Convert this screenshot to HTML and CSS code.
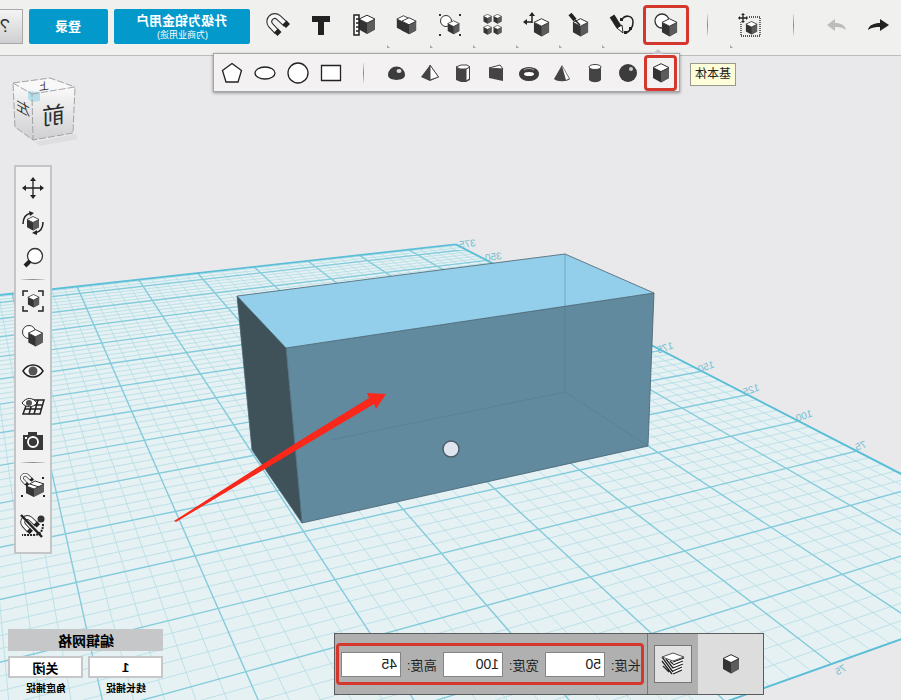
FILE: index.html
```html
<!DOCTYPE html>
<html lang="zh-CN">
<head>
    <meta charset="UTF-8">
    <title>3D 设计</title>
    <link rel="stylesheet" href="styles.css">
</head>
<body>
    <!-- shared shapes for the icons -->
    <svg class="defs" aria-hidden="true">
        <symbol id="cube" viewBox="0 0 18 20">
            <path d="M9 .7L17 4.6V15L9 19.4 1 15V4.6z" fill="#333"/>
            <path d="M9 8.6L17 4.6V15L9 19.4z" fill="#5c5c5c"/>
            <path d="M9 .7L17 4.6 9 8.6 1 4.6z" fill="#fff" stroke="#333"/>
        </symbol>
        <symbol id="magnet" viewBox="0 0 24 24">
            <path d="M11 19L4.500 12A5.500 5.500 0 0 1 12.500 4.500L20 11.500" fill="none" stroke="#333" stroke-width="6"/>
            <path d="M11 19L4.500 12A5.500 5.500 0 0 1 12.500 4.500L20 11.500" fill="none" stroke="#f8f8f8" stroke-width="3.800"/>
            <path d="M8 19.500l4-4 3.500 3.500-4 4zM16.500 11.500l4-4 3.500 3.500-4 4z" fill="#222"/>
        </symbol>
    </svg>

    <div class="app">
        <svg class="scene" viewBox="0 0 901 700" preserveAspectRatio="xMidYMid slice" aria-hidden="true">
            <path id="gridPlane" class="grid-plane"/>
            <path id="gridMinor" class="grid-minor"/>
            <path id="gridMajor" class="grid-major"/>
            <path id="gridEdge" class="grid-edge"/>
            <g id="gridLabels" class="grid-labels"></g>

            <path d="M237 296L565 254 654 293 286 348z" fill="#93cfeb"/>
            <path d="M237 296L286 348 302 523 252 450z" fill="#3f5259"/>
            <path d="M286 348L654 293 648 446 302 523z" fill="#628a9f"/>
            <path class="hidden-edge" d="M565 254V392L648 446M565 392L330 440"/>
            <path class="solid-edge" d="M237 296L565 254 654 293 286 348zM286 348L302 523 648 446 654 293M237 296L252 450 302 523"/>
            <circle cx="451" cy="449" r="8" fill="#dfe5ee" stroke="#4d5c68" stroke-width="1.500"/>
            <path d="M174 521L296 443 369 398 367 393 386 394 376 409 374 404 300 448 176 522z" fill="#f8281b"/>
        </svg>

        <header class="topbar">
            <button class="help" type="button"><span class="flip">?</span></button>
            <button class="blue login" type="button"><span class="flip">登录</span></button>
            <button class="blue upgrade" type="button">
                <span class="flip">升级为铂金用户</span>
                <small class="flip">(为商业用途)</small>
            </button>

            <button class="tool" type="button" aria-label="吸附">
                <svg width="24" height="24"><use href="#magnet"/></svg>
            </button>
            <button class="tool" type="button" aria-label="文本">
                <svg width="20" height="20"><path d="M1 1H19V7H13V20H7V7H1z" fill="#222"/></svg>
            </button>
            <button class="tool" type="button" aria-label="测量">
                <svg width="24" height="24">
                    <use href="#cube" x="6" y="1" width="18" height="21"/>
                    <path d="M2 2H7V22H2zM4 6H7M4 10H7M4 14H7M4 18H7" fill="#fff" stroke="#222" stroke-width="1.500"/>
                </svg>
            </button>
            <button class="tool has-menu" type="button" aria-label="合并">
                <svg width="24" height="24">
                    <use href="#cube" x="1" y="2" width="15" height="17"/>
                    <use href="#cube" x="6" y="4" width="16" height="18"/>
                </svg>
            </button>
            <button class="tool has-menu" type="button" aria-label="分组">
                <svg width="24" height="24">
                    <circle cx="8" cy="8" r="5.500" fill="#fff" stroke="#333"/>
                    <use href="#cube" x="9" y="7" width="13" height="15"/>
                    <path d="M1 1h2v2H1zM21 1h2v2h-2zM1 21h2v2H1zM21 21h2v2h-2z" fill="#333"/>
                </svg>
            </button>
            <button class="tool has-menu" type="button" aria-label="阵列">
                <svg width="22" height="22">
                    <use href="#cube" x="1" y="0" width="9" height="10"/>
                    <use href="#cube" x="11" y="0" width="9" height="10"/>
                    <use href="#cube" x="1" y="11" width="9" height="10"/>
                    <use href="#cube" x="11" y="11" width="9" height="10"/>
                </svg>
            </button>
            <button class="tool has-menu" type="button" aria-label="变换">
                <svg width="28" height="26">
                    <use href="#cube" x="11" y="6" width="17" height="19"/>
                    <path d="M10 11V3M10 10H3" fill="none" stroke="#222" stroke-width="1.500"/>
                    <path d="M10 0l3 4H7zM1 10l4-3v6z" fill="#222"/>
                </svg>
            </button>
            <button class="tool has-menu" type="button" aria-label="修改">
                <svg width="24" height="26">
                    <use href="#cube" x="5" y="6" width="17" height="19"/>
                    <path d="M3 2L8 8" stroke="#222" stroke-width="4"/>
                    <path d="M8 8L13 13" stroke="#222" stroke-width="1.500"/>
                </svg>
            </button>
            <button class="tool has-menu" type="button" aria-label="草图">
                <svg width="26" height="24">
                    <path d="M3 3L10 14" stroke="#222" stroke-width="5.500"/>
                    <path d="M8 15L13 12 14 20z" fill="#fff" stroke="#222"/>
                    <path d="M13 6C17 1 24 3 24 9S21 18 17 20" fill="none" stroke="#222" stroke-width="1.500"/>
                    <path d="M11 5h3v3h-3zM20 14h3v3h-3zM15 18h3v3h-3z" fill="#222"/>
                </svg>
            </button>
            <button class="tool tool-active" type="button" aria-label="基本体">
                <svg width="26" height="26">
                    <circle cx="9" cy="9" r="7" fill="#fff" stroke="#333" stroke-width="1.300"/>
                    <use href="#cube" x="8" y="6" width="17" height="19"/>
                </svg>
            </button>

            <span class="divider"></span>
            <button class="tool has-menu" type="button" aria-label="选择">
                <svg width="24" height="24">
                    <rect x="3" y="4" width="19" height="19" fill="none" stroke="#222" stroke-width="1.300" stroke-dasharray="1 1"/>
                    <use href="#cube" x="7" y="8" width="13" height="14"/>
                    <circle cx="5" cy="5" r="5" fill="#f0f0ef"/>
                    <path d="M5 1V9M1 5H9" stroke="#222" stroke-width="1.300"/>
                    <path d="M5 0l2 2H3zM5 10l2-2H3zM0 5l2-2v4zM10 5l-2-2v4z" fill="#222"/>
                </svg>
            </button>
            <span class="divider wide"></span>
            <button class="tool history" type="button" aria-label="撤销">
                <svg width="22" height="16"><path d="M1 8L9 2V6C15 6 19 8 20 13 16 10 13 10 9 10V14z" fill="#bcbcbc"/></svg>
            </button>
            <button class="tool history" type="button" aria-label="重做">
                <svg width="22" height="16"><path d="M21 8L12 2V6C6 6 1 8 0 13 4 10 8 10 12 10V14z" fill="#222"/></svg>
            </button>

            <div class="shapes">
                <button type="button" aria-label="多边形"><svg width="22" height="22"><path d="M11 1.500L20.500 8.500 17 20H5L1.500 8.500z" fill="#fff" stroke="#222" stroke-width="1.300"/></svg></button>
                <button type="button" aria-label="椭圆"><svg width="22" height="22"><ellipse cx="11" cy="11" rx="10" ry="6" fill="#fff" stroke="#222" stroke-width="1.300"/></svg></button>
                <button type="button" aria-label="圆"><svg width="22" height="22"><circle cx="11" cy="11" r="10" fill="#fff" stroke="#222" stroke-width="1.300"/></svg></button>
                <button type="button" aria-label="矩形"><svg width="22" height="22"><path d="M1.500 3.500H20.500V18.500H1.500z" fill="#fff" stroke="#222" stroke-width="1.300"/></svg></button>
                <span class="shapes-divider"></span>
                <button type="button" aria-label="半球"><svg width="20" height="20"><path d="M1 12A8 8 0 0 1 18 12C18 18.500 1 18.500 1 12z" fill="#3c3c3c"/><ellipse cx="12" cy="8" rx="2.500" ry="2" fill="#ddd"/></svg></button>
                <button type="button" aria-label="棱锥"><svg width="20" height="20"><path d="M10 2L1 14 10 18 19 14z" fill="#444"/><path d="M10 2V17L18.500 14z" fill="#fff" stroke="#444"/></svg></button>
                <button type="button" aria-label="棱柱"><svg width="20" height="20"><path d="M3 4V17L8 19H13L17 17V4z" fill="#444"/><path d="M13 6V18L16.500 16V4z" fill="#fff" stroke="#444"/><path d="M3 4L8 2H14L17 4 13 6H7z" fill="#fff" stroke="#444"/></svg></button>
                <button type="button" aria-label="楔形"><svg width="20" height="20"><path d="M3 5V15L17 18V6z" fill="#444"/><path d="M3 5L14 2 17 6z" fill="#fff" stroke="#444"/></svg></button>
                <button type="button" aria-label="圆环"><svg width="22" height="20"><ellipse cx="11" cy="11" rx="7" ry="4" fill="#fff" stroke="#3c3c3c" stroke-width="6"/><ellipse cx="11" cy="11" rx="5" ry="2" fill="#fff"/><path d="M6 7C9 5 13 5 16 7" fill="none" stroke="#aaa"/></svg></button>
                <button type="button" aria-label="圆锥"><svg width="20" height="20"><path d="M10 2L2 16C5 19 15 19 18 16z" fill="#444"/><path d="M10 3L14 17 17 15.500z" fill="#fff"/></svg></button>
                <button type="button" aria-label="圆柱"><svg width="20" height="20"><path d="M4 4V17C7 20 13 20 16 17V4z" fill="#444"/><ellipse cx="10" cy="4" rx="6" ry="2.500" fill="#fff" stroke="#444"/></svg></button>
                <button type="button" aria-label="球"><svg width="20" height="20"><circle cx="10" cy="10" r="9" fill="#3c3c3c"/><ellipse cx="13" cy="6" rx="2" ry="2" fill="#ccc"/></svg></button>
                <button type="button" class="shape-active" aria-label="长方体"><svg width="18" height="20"><use href="#cube"/></svg></button>
            </div>
            <span class="tooltip"><span class="flip">基本体</span></span>
        </header>

        <main class="workspace">
            <svg class="viewcube" width="72" height="72" viewBox="8 75 72 72" role="img" aria-label="视图">
                <defs>
                    <linearGradient id="face" x1="0" y1="0" x2="0" y2="1">
                        <stop offset="0" stop-color="#fafafa"/>
                        <stop offset="1" stop-color="#cfcfd2"/>
                    </linearGradient>
                </defs>
                <path d="M16 128L34 142 76 134 78 139 40 146z" fill="#dedde0"/>
                <path d="M13 83L32 94 33 140 15 127z" fill="url(#face)"/>
                <path d="M32 94L75 87 73 133 33 140z" fill="url(#face)"/>
                <path d="M13 83L50 78 75 87 32 94z" fill="#f8f8f9"/>
                <path d="M28 91L40 92V101L32 102 28 99z" fill="#b5dfea"/>
                <path d="M13 83L32 94 33 140 15 127zM32 94L75 87 73 133 33 140M13 83L50 78 75 87" fill="none" stroke="#a3a3a6" stroke-dasharray="7 2"/>
                <text class="cube-front" transform="translate(65 122) skewY(-8) scale(-1 1)">前</text>
                <text class="cube-side" transform="translate(30 117) skewY(30) scale(-1 1)">左</text>
                <text class="cube-top" transform="translate(49 89) skewY(-8) scale(-1 1)">上</text>
            </svg>

            <nav class="sidebar">
                <button type="button" aria-label="平移">
                    <svg width="22" height="22"><path d="M11 3V19M3 11H19" stroke="#222" stroke-width="1.300"/><path d="M11 0l3 4H8zM11 22l3-4H8zM0 11l4-3v6zM22 11l-4-3v6z" fill="#222"/></svg>
                </button>
                <button type="button" aria-label="环绕">
                    <svg width="24" height="24"><use href="#cube" x="5" y="5" width="14" height="15"/><path d="M2 13C2 6 5 3 10 2M22 11C22 18 19 21 14 22" fill="none" stroke="#222" stroke-width="1.500"/><path d="M8 0l5 2-4 3zM16 19l-5 3 5 2z" fill="#222"/></svg>
                </button>
                <button type="button" aria-label="缩放">
                    <svg width="22" height="22"><circle cx="13" cy="9" r="7.500" fill="#fff" stroke="#333" stroke-width="1.300"/><path d="M8 14L3 19" stroke="#222" stroke-width="4"/></svg>
                </button>
                <span class="rule"></span>
                <button type="button" aria-label="适应窗口">
                    <svg width="22" height="22"><path d="M1 6V1H6M16 1H21V6M21 16V21H16M6 21H1V16" fill="none" stroke="#222" stroke-width="1.500"/><use href="#cube" x="5" y="4" width="13" height="14"/></svg>
                </button>
                <button type="button" aria-label="显示样式">
                    <svg width="24" height="24"><circle cx="8" cy="8" r="6.500" fill="#fff" stroke="#333"/><use href="#cube" x="6" y="5" width="17" height="18"/></svg>
                </button>
                <button type="button" aria-label="显示">
                    <svg width="22" height="16"><path d="M1 8C6 0 16 0 21 8 16 16 6 16 1 8z" fill="#fff" stroke="#222" stroke-width="1.500"/><circle cx="11" cy="8" r="4.500" fill="#555"/></svg>
                </button>
                <button type="button" aria-label="网格显示">
                    <svg width="24" height="18"><path d="M8 3H23L19 17H2L5 9M3.500 12H21M7 8H22M8 17L12 3M13 17L17 3" fill="none" stroke="#222" stroke-width="1.500"/><path d="M1 6C5 0 12 0 16 6 12 11 5 11 1 6z" fill="#fff" stroke="#222"/><circle cx="8" cy="6" r="3" fill="#555"/></svg>
                </button>
                <button type="button" aria-label="截图">
                    <svg width="22" height="20"><path d="M1 4H6V1H15V4H21V19H1z" fill="#383838"/><circle cx="11" cy="11" r="5" fill="#383838" stroke="#fff" stroke-width="1.800"/><path d="M3 6h2v2H3z" fill="#fff"/></svg>
                </button>
                <span class="rule"></span>
                <button class="tall" type="button" aria-label="吸附对象">
                    <svg width="26" height="26"><path d="M6 13L14 16 24 11V19L14 24 6 20z" fill="#5c5c5c"/><path d="M6 13L14 16V24L6 20z" fill="#333"/><path d="M6 13L15 8 24 11 14 16zM10 11L19 14" fill="#fff" stroke="#333"/><use href="#magnet" x="0" y="0" width="14" height="14"/><path d="M22 4h2v2h-2zM1 22h2v2H1zM23 22h2v2h-2z" fill="#222"/></svg>
                </button>
                <button class="tall" type="button" aria-label="关闭吸附">
                    <svg width="26" height="26"><use href="#magnet" x="0" y="2" width="20" height="20"/><circle cx="21" cy="6" r="3.500" fill="#333"/><path d="M23 11C23 18 20 22 14 22H2" fill="none" stroke="#222" stroke-width="2" stroke-dasharray="2 1"/><path d="M1 2L22 24" stroke="#222" stroke-width="2.500"/></svg>
                </button>
            </nav>

            <footer class="bottom">
                <section class="grid-panel">
                    <button class="grid-edit" type="button"><span class="flip">编辑网格</span></button>
                    <div class="snap">
                        <input class="flip" type="text" id="angle" value="关闭">
                        <label for="angle"><span class="flip">角度捕捉</span></label>
                    </div>
                    <div class="snap">
                        <input class="flip" type="text" id="length" value="1">
                        <label for="length"><span class="flip">线长捕捉</span></label>
                    </div>
                </section>

                <section class="properties">
                    <div class="dimensions">
                        <input class="flip" type="text" id="h" value="45">
                        <label for="h"><span class="flip">高度:</span></label>
                        <input class="flip" type="text" id="w" value="100">
                        <label for="w"><span class="flip">宽度:</span></label>
                        <input class="flip" type="text" id="l" value="50">
                        <label for="l"><span class="flip">长度:</span></label>
                    </div>
                    <div class="material">
                        <button type="button" aria-label="材质">
                            <svg width="24" height="24">
                                <path d="M1 5L12 9 23 5 21 17 12 22 3 17z" fill="#fff"/>
                                <path d="M1 5L12 20M1 9L11 22M2 14L8 20M5 7L12 16M9 9L12 12M12 10L23 6M12 13L22 9M12 16L22 12M12 19L21 15M12 22L21 18" stroke="#222" stroke-width="1.300"/>
                                <path d="M12 1L23 5 12 9 1 5z" fill="#fff" stroke="#555"/>
                            </svg>
                        </button>
                    </div>
                    <button class="solid" type="button" aria-label="实体"><svg width="18" height="20"><use href="#cube"/></svg></button>
                </section>
            </footer>
        </main>
    </div>

    <script src="grid.js"></script>
</body>
</html>
```
FILE: styles.css
```css
* {
    box-sizing: border-box;
}

body {
    margin: 0;
    background-color: #e9e8ea;
    font-family: "Liberation Sans", "Noto Sans CJK SC", sans-serif;
    color: #222;
}

button {
    display: flex;
    justify-content: center;
    align-items: center;
    padding: 0;
    border: none;
    background: none;
    font-family: inherit;
    cursor: pointer;
}

input {
    font-family: inherit;
}

.defs {
    position: absolute;
    width: 0;
    height: 0;
}

/* mirrored lettering */
.flip {
    display: inline-block;
    transform: scaleX(-1);
}

.app {
    position: relative;
    display: flex;
    flex-direction: column;
    min-height: 100vh;
    overflow: hidden;
}

/* 3D scene */
.scene {
    position: absolute;
    top: 0;
    left: 0;
    width: 100%;
    height: 100%;
}

.grid-plane {
    fill: #e6f1f4;
}

.grid-minor,
.grid-major,
.grid-edge {
    fill: none;
    stroke: #b2dde5;
    stroke-width: 0.8;
}

.grid-major {
    stroke: #84cbdb;
    stroke-width: 1.4;
}

.grid-edge {
    stroke: #5cbfd8;
    stroke-width: 1.8;
}

.grid-labels {
    fill: #6cbfd3;
    font-size: 10px;
}

.hidden-edge {
    fill: none;
    stroke: #537789;
    opacity: 0.5;
}

.solid-edge {
    fill: none;
    stroke: #476270;
    stroke-width: 0.8;
}

/* top bar */
.topbar {
    position: relative;
    display: flex;
    align-items: center;
    height: 56px;
    padding-bottom: 2px;
    background-color: #f0f0ef;
    border-bottom: 1px solid #bdbdbf;
}

.help {
    width: 23px;
    height: 35px;
    padding-right: 12px;
    border: 1px solid #a9a9a9;
    border-left: none;
    background: linear-gradient(#f4f4f4, #cfcfd1);
    font-size: 18px;
    color: #333;
}

.blue {
    flex-direction: column;
    height: 35px;
    margin-left: 6px;
    border-radius: 2px;
    background-color: #0499cb;
    color: white;
    font-size: 13px;
    font-weight: bold;
    line-height: 16px;
}

.blue small {
    font-size: 9px;
    font-weight: normal;
    line-height: 12px;
}

.login {
    width: 79px;
}

.upgrade {
    width: 136px;
    margin-right: 6px;
}

.tool {
    position: relative;
    flex: none;
    width: 43px;
    height: 40px;
    margin-bottom: 4px;
}

.has-menu::after {
    content: "";
    position: absolute;
    left: 2px;
    bottom: -3px;
    border-left: 3px solid #a5a5a5;
    border-top: 3px solid transparent;
}

.tool-active {
    width: 46px;
    border: 3px solid #d4372c;
    border-radius: 4px;
}

.divider {
    width: 1px;
    height: 22px;
    margin: 0 20px 4px 18px;
    background: linear-gradient(#ddd, #888, #ddd);
}

.divider.wide {
    margin: 0 22px 4px;
}

.history {
    width: 42px;
}

.shapes {
    position: absolute;
    left: 213px;
    top: 53px;
    z-index: 1;
    display: flex;
    align-items: center;
    height: 39px;
    padding: 0 2px 0 1px;
    background-color: #f3f1f2;
    border: 1px solid #a5a5a7;
    box-shadow: 0 1px 3px rgba(0, 0, 0, 0.4);
}

.shapes::before {
    content: "";
    position: absolute;
    right: 16px;
    top: -5px;
    border: 5px solid transparent;
    border-top: none;
    border-bottom-color: #c6c6cc;
}

.shapes button {
    width: 33px;
    height: 36px;
}

.shapes .shape-active {
    border: 3px solid #d4372c;
    border-radius: 4px;
}

.shapes-divider {
    width: 1px;
    height: 20px;
    margin: 0 16px;
    background: linear-gradient(#ddd, #888, #ddd);
}

.tooltip {
    position: absolute;
    left: 690px;
    top: 63px;
    z-index: 1;
    padding: 1px 4px;
    border: 1px solid #9a9a8c;
    background-color: #fdfdd9;
    font-size: 12px;
    line-height: 19px;
}

/* workspace */
.workspace {
    position: relative;
    flex: 1;
    display: flex;
    flex-direction: column;
    align-items: flex-start;
    padding-top: 19px;
}

.viewcube {
    margin-left: 8px;
}

.viewcube text {
    fill: #2c2c2c;
}

.cube-front {
    font-size: 23px;
}

.cube-side {
    font-size: 14px;
}

.cube-top {
    font-size: 10px;
}

.sidebar {
    display: flex;
    flex-direction: column;
    align-items: center;
    width: 38px;
    margin: 18px 0 0 14px;
    padding: 3px 0 6px;
    background-color: #f2f1f2;
    border: 2px solid #c3c5c6;
}

.sidebar button {
    width: 34px;
    height: 35px;
}

.sidebar .tall {
    height: 40px;
}

.rule {
    width: 24px;
    height: 1px;
    margin: 4px 0 3px;
    background: linear-gradient(to right, #ddd, #888, #ddd);
}

.bottom {
    display: flex;
    align-items: flex-end;
    width: 100%;
    margin-top: auto;
    padding: 0 8px 5px;
}

.grid-panel {
    display: grid;
    grid-template-columns: 75px 75px;
    gap: 5px;
}

.grid-edit {
    grid-column: span 2;
    height: 22px;
    background-color: #c6c7c8;
    color: #000;
    font-size: 14px;
    font-weight: bold;
}

.snap {
    display: flex;
    flex-direction: column;
    align-items: center;
}

.snap input {
    width: 75px;
    height: 22px;
    padding: 0;
    border: 2px solid #c6c7c8;
    background-color: white;
    color: #000;
    font-size: 13px;
    font-weight: bold;
    text-align: center;
}

.snap label {
    margin-top: 4px;
    color: #000;
    font-size: 10px;
    font-weight: bold;
    line-height: 13px;
}

.properties {
    display: flex;
    height: 62px;
    margin-left: 171px;
    border: 1px solid #5c5c5c;
    background-color: #b0b0b0;
}

.dimensions {
    display: flex;
    align-items: center;
    gap: 6px;
    height: 42px;
    margin: 9px 3px 0 1px;
    padding: 0 0 0 2px;
    border: 3px solid #d4372c;
    border-radius: 4px;
}

.dimensions input {
    width: 60px;
    height: 25px;
    padding: 0 3px;
    border: 1px solid #858585;
    background-color: white;
    color: #222;
    font-size: 14px;
}

.dimensions label {
    width: 30px;
    font-size: 13px;
    white-space: nowrap;
}

.material {
    display: flex;
    align-items: center;
    padding: 0 6px;
    border-left: 1px solid #777;
}

.material button {
    width: 38px;
    height: 38px;
    border: 1px solid #777;
    background-color: #e2e2e2;
}

.solid {
    width: 65px;
    background-color: #dedddd;
}
```
FILE: grid.js
```js
// Work plane seen in perspective. i counts major cells away from the
// right edge, j counts them away from the front edge.
const FAR = 14.5;
const LEFT = 14;
const STEPS = 5;

function project(i, j) {
    const d = 1 - 0.046 * i + 0.0853 * j;
    return [
        (1090.6 - 124.6 * i - 4.9 * j) / d,
        (571.6 + 0.26 * i - 1.72 * j) / d
    ];
}

function point(i, j) {
    return project(i, j).map(v => v.toFixed(1)).join(" ");
}

function line(i1, j1, i2, j2) {
    return "M" + point(i1, j1) + "L" + point(i2, j2);
}

let minor = "";
let major = "";

for (let n = 0; n <= LEFT * STEPS; n++) {
    const d = line(n / STEPS, 0, n / STEPS, FAR);
    if (n % STEPS === 0) major += d; else minor += d;
}
for (let n = 0; n <= FAR * STEPS; n++) {
    const d = line(0, n / STEPS, LEFT, n / STEPS);
    if (n % STEPS === 0) major += d; else minor += d;
}

document.getElementById("gridMinor").setAttribute("d", minor);
document.getElementById("gridMajor").setAttribute("d", major);
document.getElementById("gridPlane").setAttribute("d",
    "M" + point(0, 0) + "L" + point(LEFT, 0) + "L" + point(LEFT, FAR) + "L" + point(0, FAR) + "z");
document.getElementById("gridEdge").setAttribute("d",
    line(0, 0, 0, FAR) + line(0, 0, LEFT, 0) + line(0, FAR, LEFT, FAR));

// mirrored numbers along the edges
const labels = [
    ["75", 867, 447, -20], ["100", 813, 416, -20], ["125", 760, 390, -20],
    ["150", 715, 367, -20], ["175", 674, 348, -20],
    ["350", 502, 259, -8], ["375", 476, 246, -8], ["75", 847, 670, -30]
];

labels.forEach(([value, x, y, angle]) => {
    const text = document.createElementNS("http://www.w3.org/2000/svg", "text");
    text.setAttribute("transform", `translate(${x} ${y}) rotate(${angle}) scale(-1 1)`);
    text.textContent = value;
    document.getElementById("gridLabels").appendChild(text);
});
```
